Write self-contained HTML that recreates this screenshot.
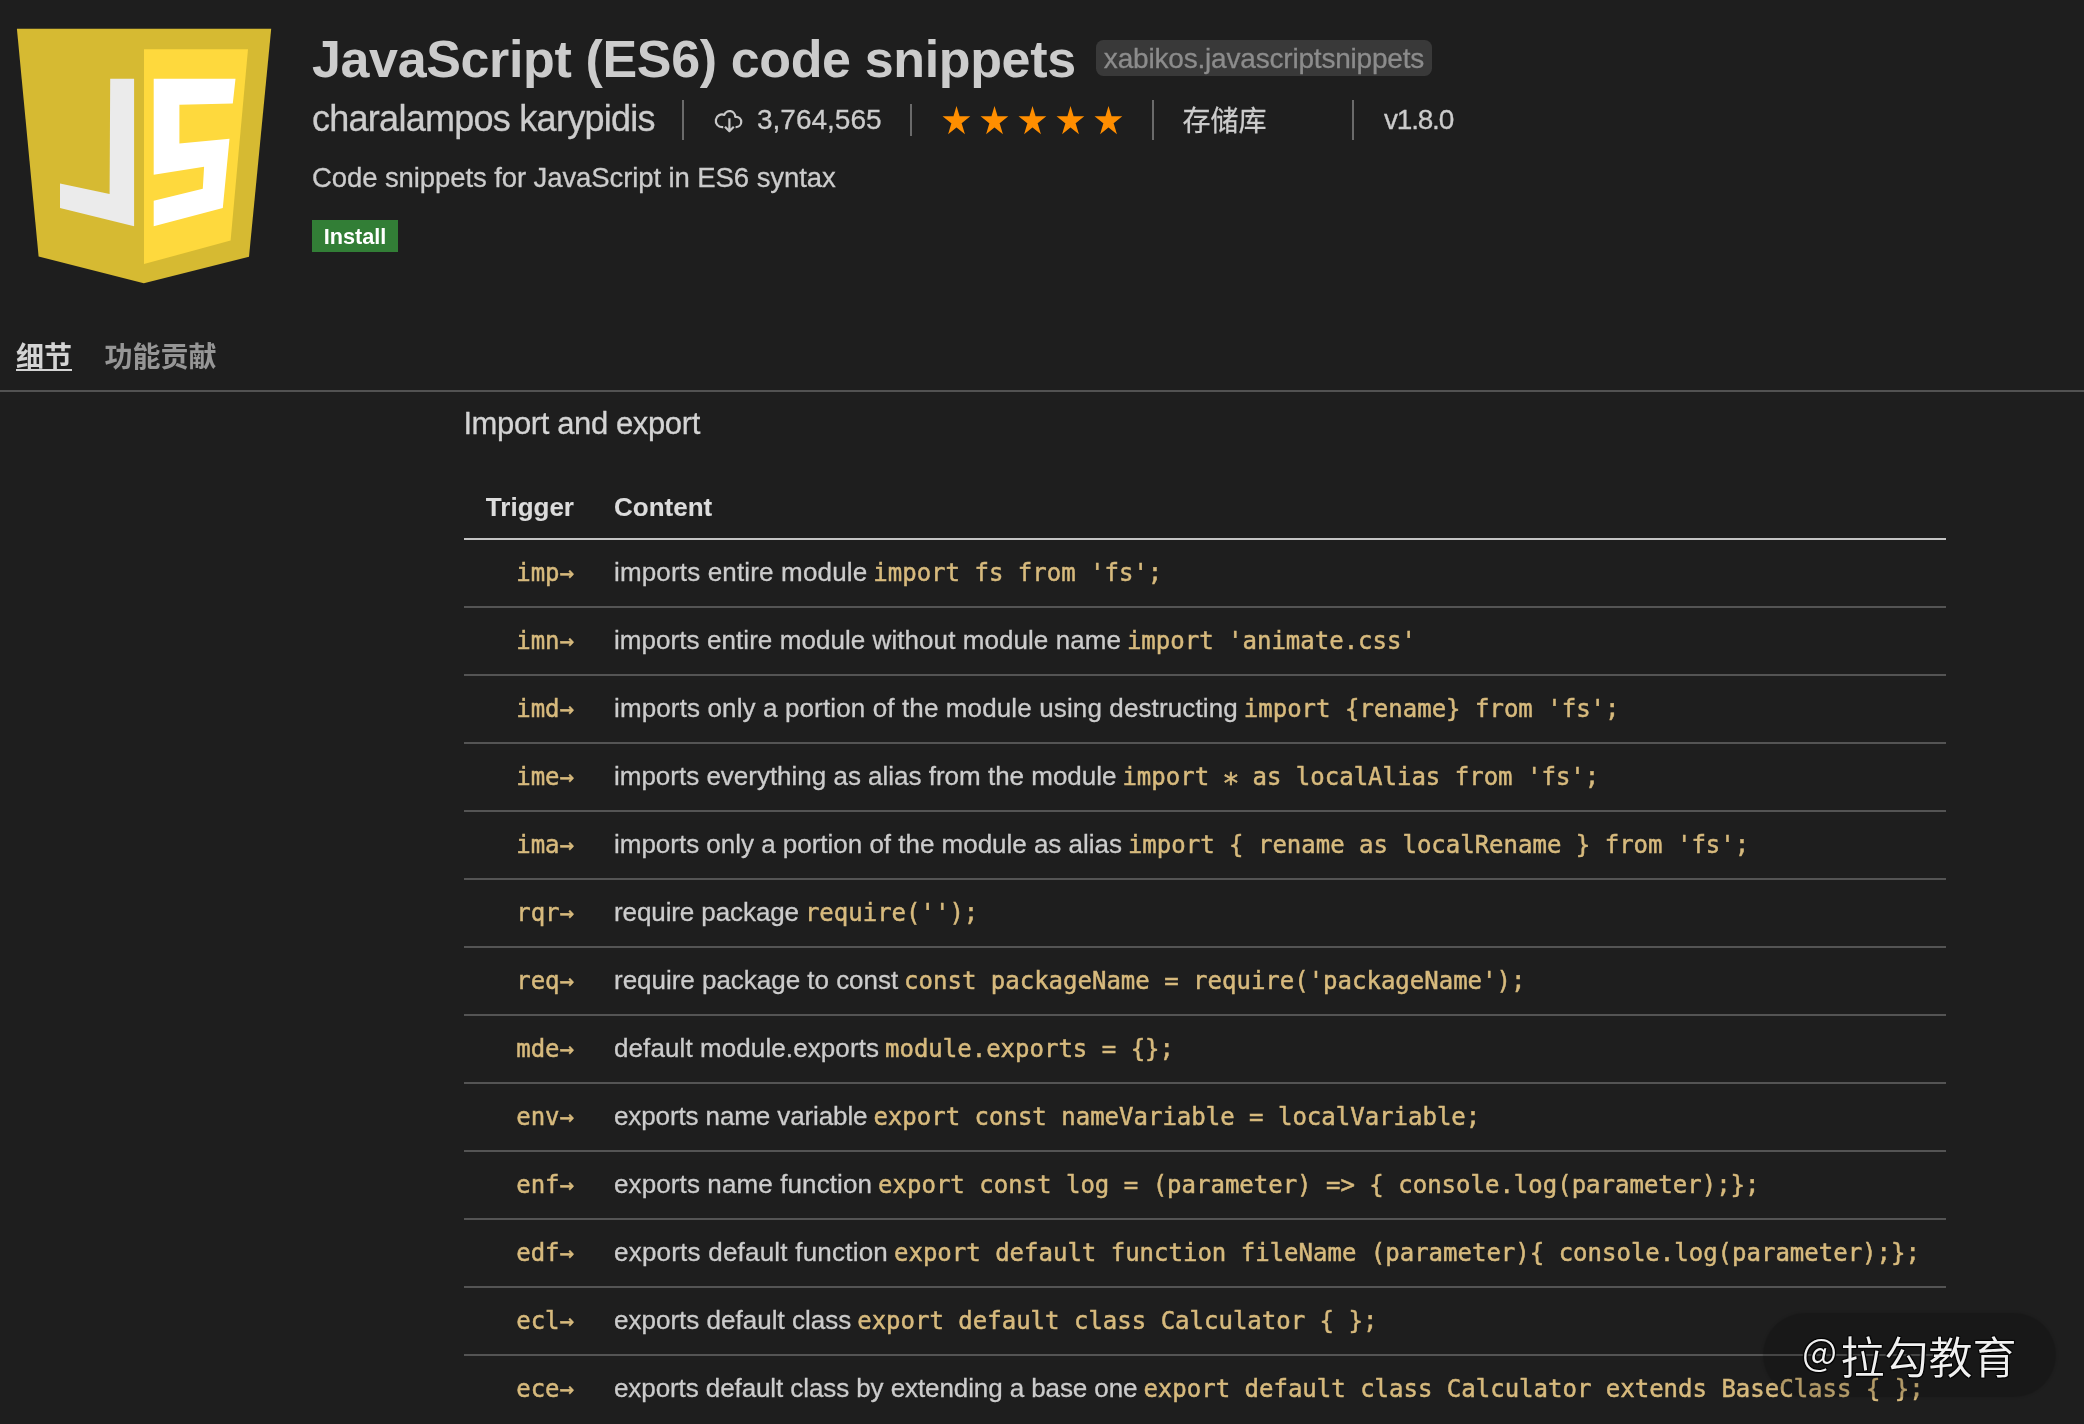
<!DOCTYPE html>
<html lang="zh">
<head>
<meta charset="utf-8">
<title>JavaScript (ES6) code snippets</title>
<style>
html,body{margin:0;padding:0;}
body{width:2084px;height:1424px;overflow:hidden;background:#1e1e1e;color:#cccccc;
 font-family:"Liberation Sans","Noto Sans CJK SC",sans-serif;position:relative;-webkit-text-stroke:0.3px currentColor;}
#root{position:absolute;left:0;top:0;width:2084px;height:1424px;will-change:transform;}
.abs{position:absolute;white-space:nowrap;}
#gfx{position:absolute;left:0;top:0;}
#title{left:312px;top:26.7px;-webkit-text-stroke:0;font-size:52px;font-weight:bold;line-height:64px;color:#cccccc;letter-spacing:-0.36px;}
#ident{left:1096px;top:40px;width:336px;height:36px;background:#393939;border-radius:7.5px;
 color:#8c8c8c;font-size:28px;line-height:38px;text-align:center;letter-spacing:-0.19px;}
#pub{left:312px;top:97px;font-size:36px;line-height:44px;letter-spacing:-0.73px;}
.sep{position:absolute;width:2px;background:#6a6a6a;}
#cnt{left:757px;top:102px;font-size:28px;line-height:36px;}
#repo{left:1182.5px;top:101.5px;font-size:28px;line-height:40px;}
#ver{left:1384px;top:102px;font-size:28px;line-height:36px;letter-spacing:-1.2px;}
#desc{left:312px;top:160px;font-size:27.5px;line-height:36px;letter-spacing:-0.09px;}
#install{-webkit-text-stroke:0;left:312px;top:220px;width:86px;height:32px;background:#327e36;color:#fff;font-weight:bold;
 font-size:21.7px;line-height:33.4px;text-align:center;}
#tab1{-webkit-text-stroke:0;left:16px;top:337.5px;font-size:28px;line-height:40px;font-weight:bold;color:#d4d4d4;}
#tab1u{position:absolute;left:16px;top:368.6px;width:56px;height:2px;background:#d4d4d4;}
#tab2{-webkit-text-stroke:0;left:104.5px;top:337.5px;font-size:28px;line-height:40px;font-weight:bold;color:#969696;}
#tabline{position:absolute;left:0;top:390px;width:2084px;height:2px;background:#525252;}
#h3{left:463.4px;top:404.3px;font-size:31px;line-height:40px;color:#d4d4d4;letter-spacing:-0.38px;}
table{position:absolute;left:464px;top:472px;width:1482px;border-collapse:collapse;font-size:26px;table-layout:fixed;}
th,td{height:66px;padding:0 20px;text-align:left;white-space:nowrap;border-bottom:2px solid #545454;vertical-align:middle;}
th{-webkit-text-stroke:0.1px;font-weight:bold;color:#dcdcdc;border-bottom:2px solid #c4c4c4;height:61.6px;padding-top:4.4px;}
tr:last-child td{border-bottom:none;}
th:first-child,td:first-child{text-align:right;width:90px;}
span.t{display:inline-block;margin-right:-1.3px;}
code{font-family:"DejaVu Sans Mono","Liberation Mono",monospace;font-size:24px;color:#d7ba7d;-webkit-text-stroke:0.5px #d7ba7d;}
#wm{left:1763px;top:1313px;width:293px;height:84px;border-radius:42px;background:rgba(0,0,0,0.17);box-shadow:0 0 3px rgba(0,0,0,0.17);}
.ast{font-size:28.8px;margin:0 -1.445px;position:relative;top:7.1px;line-height:0;}
#wmat{font-size:37.5px;position:relative;top:-7.5px;letter-spacing:0;margin-right:3.5px;}
#wmt{left:1802px;top:1324.5px;font-size:44px;line-height:60px;color:#f0f0f0;font-weight:350;-webkit-text-stroke:0;letter-spacing:0;
 font-family:"Noto Sans CJK SC","Liberation Sans",sans-serif;
 text-shadow:0 0 2px #000,1px 1px 1px rgba(0,0,0,.8),-1px -1px 1px rgba(0,0,0,.8),1px -1px 1px rgba(0,0,0,.8),-1px 1px 1px rgba(0,0,0,.8);}
</style>
</head>
<body>
<div id="root">
<svg id="gfx" width="2084" height="300" viewBox="0 0 2084 300">
 <polygon points="16.9,28.8 271.2,28.8 249,256.8 143.8,283.2 38.6,256.4" fill="#d6ba32"/>
 <polygon points="144,49.2 248,49.2 230.6,240.6 144,264" fill="#fed93d"/>
 <polygon points="110.2,78.7 134.1,78.7 134.1,226.3 60,208.1 60,183.4 109.6,194.1" fill="#ebebeb"/>
 <polygon points="153.7,78.7 235.5,78.7 232.8,103.4 179.4,104.7 179.4,143.4 229.5,138.7 222.8,208.1 153.7,226.3 153.7,200.8 202.8,188.8 204.1,166.7 153.7,174.7" fill="#ffffff"/>
 <g fill="none" stroke="#c8c8c8" stroke-width="2.2" stroke-linejoin="round">
  <path d="M723.2 127.1H722.1A6.3 6.3 0 1 1 724.3 114.9A5.6 5.6 0 0 1 735.2 116.8H736.1A5.15 5.15 0 0 1 736.1 127.1H735.6"/>
  <path d="M729.4 118.2V131M725 126.8L729.4 131.2L733.8 126.8"/>
 </g>
 <polygon fill="#ff8e00" fill-rule="nonzero" points="956.50,105.90 964.95,134.15 942.55,116.20 970.30,116.20 948.10,134.15"/>
 <polygon fill="#ff8e00" fill-rule="nonzero" points="994.50,105.90 1002.95,134.15 980.55,116.20 1008.30,116.20 986.10,134.15"/>
 <polygon fill="#ff8e00" fill-rule="nonzero" points="1032.50,105.90 1040.95,134.15 1018.55,116.20 1046.30,116.20 1024.10,134.15"/>
 <polygon fill="#ff8e00" fill-rule="nonzero" points="1070.50,105.90 1078.95,134.15 1056.55,116.20 1084.30,116.20 1062.10,134.15"/>
 <polygon fill="#ff8e00" fill-rule="nonzero" points="1108.50,105.90 1116.95,134.15 1094.55,116.20 1122.30,116.20 1100.10,134.15"/>
</svg>
<div class="abs" id="title">JavaScript (ES6) code snippets</div>
<div class="abs" id="ident">xabikos.javascriptsnippets</div>
<div class="abs" id="pub">charalampos karypidis</div>
<div class="sep" style="left:682px;top:100px;height:40px"></div>
<div class="abs" id="cnt">3,764,565</div>
<div class="sep" style="left:910px;top:104px;height:32px"></div>
<div class="sep" style="left:1152px;top:100px;height:40px"></div>
<div class="abs" id="repo">存储库</div>
<div class="sep" style="left:1352px;top:100px;height:40px"></div>
<div class="abs" id="ver">v1.8.0</div>
<div class="abs" id="desc">Code snippets for JavaScript in ES6 syntax</div>
<div class="abs" id="install">Install</div>
<div class="abs" id="tab1">细节</div><div id="tab1u"></div>
<div class="abs" id="tab2">功能贡献</div>
<div id="tabline"></div>
<div class="abs" id="h3">Import and export</div>
<table>
<tr><th>Trigger</th><th>Content</th></tr>
<tr><td><code>imp→</code></td><td><span class="t" style="letter-spacing:0.160px">imports entire module</span> <code>import fs from 'fs';</code></td></tr>
<tr><td><code>imn→</code></td><td><span class="t" style="letter-spacing:0.063px">imports entire module without module name</span> <code>import 'animate.css'</code></td></tr>
<tr><td><code>imd→</code></td><td><span class="t" style="letter-spacing:0.125px">imports only a portion of the module using destructing</span> <code>import {rename} from 'fs';</code></td></tr>
<tr><td><code>ime→</code></td><td><span class="t" style="letter-spacing:-0.010px">imports everything as alias from the module</span> <code>import <span class="ast">*</span> as localAlias from 'fs';</code></td></tr>
<tr><td><code>ima→</code></td><td><span class="t" style="letter-spacing:-0.017px">imports only a portion of the module as alias</span> <code>import { rename as localRename } from 'fs';</code></td></tr>
<tr><td><code>rqr→</code></td><td><span class="t" style="letter-spacing:-0.100px">require package</span> <code>require('');</code></td></tr>
<tr><td><code>req→</code></td><td><span class="t" style="letter-spacing:-0.024px">require package to const</span> <code>const packageName = require('packageName');</code></td></tr>
<tr><td><code>mde→</code></td><td><span class="t" style="letter-spacing:0.091px">default module.exports</span> <code>module.exports = {};</code></td></tr>
<tr><td><code>env→</code></td><td><span class="t" style="letter-spacing:-0.112px">exports name variable</span> <code>export const nameVariable = localVariable;</code></td></tr>
<tr><td><code>enf→</code></td><td><span class="t" style="letter-spacing:0.111px">exports name function</span> <code>export const log = (parameter) =&gt; { console.log(parameter);};</code></td></tr>
<tr><td><code>edf→</code></td><td><span class="t" style="letter-spacing:0.217px">exports default function</span> <code>export default function fileName (parameter){ console.log(parameter);};</code></td></tr>
<tr><td><code>ecl→</code></td><td><span class="t" style="letter-spacing:0.012px">exports default class</span> <code>export default class Calculator { };</code></td></tr>
<tr><td><code>ece→</code></td><td><span class="t" style="letter-spacing:-0.091px">exports default class by extending a base one</span> <code>export default class Calculator extends BaseClass { };</code></td></tr>
</table>
<div class="abs" id="wm"></div>
<div class="abs" id="wmt"><span id="wmat">@</span>拉勾教育</div>
</div>
</body>
</html>
